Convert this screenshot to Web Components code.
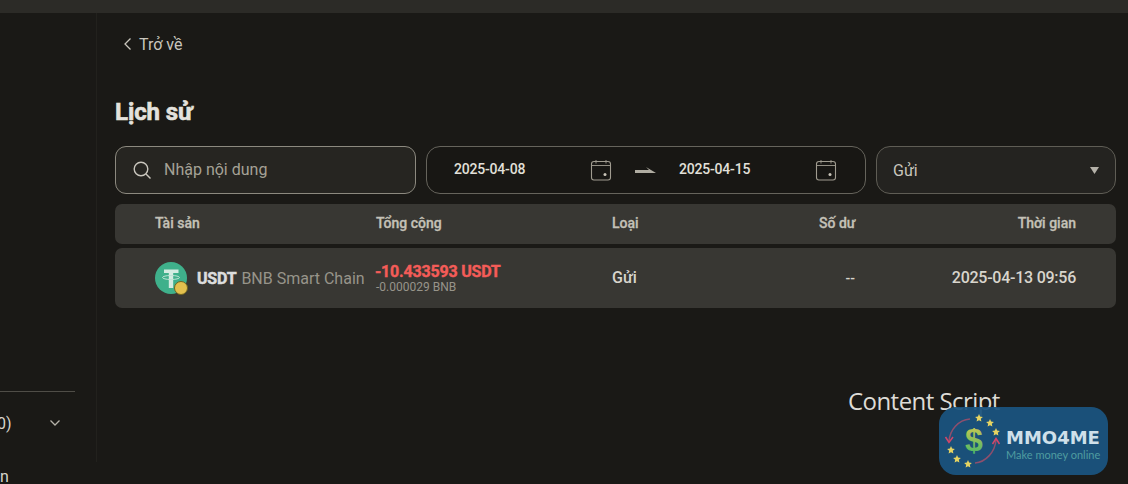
<!DOCTYPE html>
<html><head><meta charset="utf-8"><style>
html,body{margin:0;height:100%;overflow:hidden;background:#1a1916}
body{width:1128px;height:484px;font-family:Roboto,"Noto Sans",sans-serif;color:#e6e4df}
</style></head><body>
<app-shell></app-shell>
<script>
const def=(name,html)=>{customElements.define(name,class extends HTMLElement{constructor(){super();this.attachShadow({mode:'open'}).innerHTML=html;}});};
const cal=`<svg width="22" height="22" viewBox="0 0 22 22" fill="none" stroke="#a09c90" stroke-width="1.100"><rect x="1.500" y="2.500" width="19" height="18.500" rx="2.500"/><path d="M1.500 6.500H20.500M6 1v3.500M16 1v3.500" stroke-width=".9"/><circle cx="15" cy="15.500" r="1.500" fill="#c8c4b8" stroke="none"/></svg>`;
def('side-bar',`<style>:host{display:flex;flex-direction:column;width:97px;height:449px;box-sizing:border-box;border-right:1px solid #22211d;font-size:16px;color:#d8d5cd;flex:none}
.sp{height:378px;flex:none}.line{height:1px;background:#4f4d47;width:75px;flex:none}
.row{display:flex;justify-content:space-between;align-items:center;width:61px;height:63px;box-sizing:border-box;padding-bottom:1px;flex:none}
.row span{margin-left:-3px}.row svg{display:block}.n{font-size:16px;margin-top:14px;line-height:16px;flex:none}</style>
<div class="sp"></div><div class="line"></div>
<div class="row"><span>0)</span><svg width="12" height="8" viewBox="0 0 12 8" fill="none" stroke="#b5b2a9" stroke-width="1.300"><path d="M1.500 1.500 6 6l4.500-4.500"/></svg></div>
<div class="n">n</div>`);
def('top-nav',`<style>:host{display:flex;align-items:center;gap:7px;height:20px;padding-left:8px;font-size:16px;color:#c9c6bd}</style>
<svg width="9" height="14" viewBox="0 0 9 14" fill="none" stroke="#c9c6bd" stroke-width="1.300"><path d="M7.500 1.500 2 7l5.500 5.500"/></svg><span>Trở về</span>`);
def('page-title',`<style>:host{display:block;font-size:24px;line-height:32px;font-weight:700;color:#e4e2dd;-webkit-text-stroke:.6px #e4e2dd;letter-spacing:-.1px}</style><slot></slot>`);
def('search-box',`<style>:host{display:flex;align-items:center;box-sizing:border-box;width:301px;height:48px;border:1px solid #8c897f;border-radius:11px;background:#262521;padding-left:16px;gap:12px;font-size:16px;color:#a5a296}span{margin-top:-2px}</style>
<svg width="20" height="20" viewBox="0 0 20 20" fill="none" stroke="#c9c6bd" stroke-width="1.400"><circle cx="9" cy="9" r="6.800"/><path d="m14 14 4.500 4.500"/></svg><span>Nhập nội dung</span>`);
def('date-range',`<style>:host{display:flex;align-items:center;box-sizing:border-box;width:440px;height:48px;border:1px solid #66645c;border-radius:14px;background:#181714;padding-left:27px;font-size:14px;font-weight:500;color:#e2e0da;margin-left:10px;flex:none;letter-spacing:-.2px}
.d{width:136px;margin-top:-2px}.ic{width:22px;height:22px;flex:none}.ar{margin:0 22px 0 23px;width:22px}.ar svg{display:block}.ic svg{display:block}</style>
<span class="d">2025-04-08</span><span class="ic">${cal}</span><span class="ar"><svg width="22" height="8" viewBox="0 0 22 8"><path d="M0 4h14l-3-3 10 6H0z" fill="#b0ada2"/></svg></span><span class="d">2025-04-15</span><span class="ic">${cal}</span>`);
def('type-select',`<style>:host{display:flex;align-items:center;justify-content:space-between;box-sizing:border-box;width:240px;height:48px;border:1px solid #5f5d55;border-radius:14px;background:#242320;padding:0 16px 0 16px;font-size:16px;color:#c9c6bd;margin-left:10px;flex:none}
span{margin-top:1px}</style><span>Gửi</span><svg width="9" height="7" viewBox="0 0 9 7"><path d="M0 0h9L4.500 7z" fill="#b5b2a9"/></svg>`);
def('filter-bar',`<style>:host{display:flex;margin-top:18px;align-items:center}</style><search-box></search-box><date-range></date-range><type-select></type-select>`);
const cols=`display:grid;grid-template-columns:221px 236px 207px 36px 1fr;`;
def('table-head',`<style>:host{${cols}box-sizing:border-box;height:40px;margin-top:10px;align-items:center;background:#383733;border-radius:7px;padding:0 40px 2px;font-size:14px;font-weight:500;color:#c4c1b7;-webkit-text-stroke:.3px #c4c1b7}
.r{text-align:right;white-space:nowrap}</style><span>Tài sản</span><span>Tổng cộng</span><span>Loại</span><span class="r">Số dư</span><span class="r">Thời gian</span>`);
def('coin-icon',`<style>:host{display:block;position:relative;width:32px;height:32px;flex:none}svg{display:block}
i{position:absolute;right:-1px;bottom:-1px;width:14px;height:14px;border-radius:50%;background:#e3c04e;border:1.500px solid #6f6420;box-sizing:border-box}</style>
<svg width="32" height="32" viewBox="0 0 32 32"><circle cx="16" cy="16" r="16" fill="#3fb08b"/><path d="M9 7.500h14.500v3.500H18.200v15h-4.400V11H9z" fill="#d5ece2"/><ellipse cx="16" cy="15.500" rx="8.500" ry="2" fill="none" stroke="#bfe4d6" stroke-width="1"/></svg><i></i>`);
def('table-row',`<style>:host{${cols}box-sizing:border-box;height:60px;margin-top:4px;align-items:center;background:#383733;border-radius:7px;padding:0 40px;font-size:16px;color:#d8d5cd}
.a{display:flex;align-items:center;gap:10px;white-space:nowrap}.a b{color:#ddd;-webkit-text-stroke:.5px #ddd;letter-spacing:-.2px}.a em{font-style:normal;color:#97948a;margin-left:1px}
.t{font-size:16px;font-weight:700;color:#f45c58;line-height:18px;letter-spacing:-.2px;margin-left:-1px;-webkit-text-stroke:.4px #f45c58;white-space:nowrap}.s{font-size:12px;color:#97948a;line-height:13px;white-space:nowrap}
.r{text-align:right;white-space:nowrap}.l{font-weight:500;margin-top:-2px}.x{font-size:14px;font-weight:500;}.tm{letter-spacing:-.25px}</style>
<div class="a"><coin-icon></coin-icon><span><b>USDT</b> <em>BNB Smart Chain</em></span></div>
<div class="c"><div class="t">-10.433593 USDT</div><div class="s">-0.000029 BNB</div></div>
<span class="l">Gửi</span><span class="r x">--</span><span class="r l tm">2025-04-13 09:56</span>`);
def('main-panel',`<style>:host{display:block;flex:1;padding:21px 12px 0 18px;min-width:0}page-title{margin-top:42px}</style>
<top-nav></top-nav><page-title>Lịch sử</page-title><filter-bar></filter-bar><table-head></table-head><table-row></table-row>`);
const star=(x,y)=>`<path transform="translate(${x} ${y})" d="M0-4l1.100 2.600 2.800.3-2.100 1.900.6 2.800L0 2.200-2.400 3.600l.6-2.800-2.100-1.900 2.800-.3z"/>`;
def('mmo-badge',`<style>:host{position:absolute;left:939px;top:407px;width:169px;height:68px;border-radius:17px;background:rgba(27,84,128,.94)}
svg{position:absolute;left:5px;top:2px}.t{position:absolute;left:67px;top:22px;font-size:18px;font-weight:700;color:#cfe0ea;line-height:18px;font-family:"DejaVu Sans",sans-serif}
.s{position:absolute;left:67px;top:42px;font-size:11px;line-height:12px;color:#4f9ca0;font-family:Lato,sans-serif;white-space:nowrap}</style>
<svg width="60" height="62" viewBox="0 0 60 62">
<defs><linearGradient id="g" x1="0" y1="0" x2="0" y2="1"><stop offset="0" stop-color="#dcc94e"/><stop offset="1" stop-color="#39b56a"/></linearGradient></defs>
<path d="M26 10C14 11 6 21 5 32" stroke="#8e4f6d" stroke-width="1.500" fill="none"/><path d="M1.500 28l3.500 5.500L9 28" stroke="#d2476a" stroke-width="1.500" fill="none"/>
<path d="M31 54c11-1 20-11 21-23" stroke="#8e4f6d" stroke-width="1.500" fill="none"/><path d="M48.500 35l3.500-5.500 3.500 5.500" stroke="#d2476a" stroke-width="1.500" fill="none"/>
<g fill="#e6d462">${star(35,9)}${star(46,14)}${star(52,23)}${star(7,41)}${star(13,50)}${star(24,55)}</g>
<text x="30" y="42" text-anchor="middle" font-family="Liberation Sans" font-weight="700" font-size="32" fill="url(#g)">$</text>
</svg><span class="t">MMO4ME</span><span class="s">Make money online</span>`);
def('app-shell',`<style>:host{display:block;position:relative;width:1128px;height:484px;overflow:hidden;background:#1a1916}
.top{height:13px;background:#2c2b27}.b{display:flex}.cs{position:absolute;left:848px;top:386px;font:24px/30px "Open Sans",sans-serif;color:#dedcd6;letter-spacing:-.55px}</style>
<div class="top"></div><div class="b"><side-bar></side-bar><main-panel></main-panel></div><span class="cs">Content Script</span><mmo-badge></mmo-badge>`);
</script></body></html>
